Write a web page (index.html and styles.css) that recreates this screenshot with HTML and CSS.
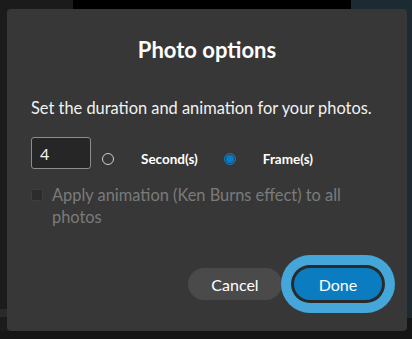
FILE: index.html
```html
<!DOCTYPE html>
<html lang="en">
<head>
  <meta charset="UTF-8">
  <meta name="viewport" content="width=device-width, initial-scale=1.0">
  <title>Photo options</title>
  <link rel="stylesheet" href="styles.css">
</head>
<body>
  <div class="app">
    <div class="topbar">
      <div class="topbar-left"></div>
      <div class="topbar-center"></div>
      <div class="topbar-right"></div>
    </div>
    <div class="workspace">
      <div class="side-left">
        <div class="side-band"></div>
      </div>
      <div class="stage"></div>
      <div class="side-right"></div>
    </div>
    <div class="statusbar"></div>
  </div>

  <div class="dialog" role="dialog" aria-labelledby="dialogTitle">
    <h3 id="dialogTitle">Photo options</h3>
    <p class="intro">Set the duration and animation for your photos.</p>

    <div class="duration-row">
      <input type="text" class="duration-input" value="4">
      <label class="radio">
        <input type="radio" name="unit">
        <span class="radio-mark"></span>
        <span class="radio-text">Second(s)</span>
      </label>
      <label class="radio">
        <input type="radio" name="unit" checked>
        <span class="radio-mark"></span>
        <span class="radio-text">Frame(s)</span>
      </label>
    </div>

    <label class="check disabled">
      <input type="checkbox" disabled>
      <span class="check-mark"></span>
      <span class="check-text">Apply animation (Ken Burns effect) to all photos</span>
    </label>

    <div class="actions">
      <button class="btn btn-cancel">Cancel</button>
      <button class="btn btn-done">Done</button>
    </div>
  </div>
</body>
</html>
```

FILE: styles.css
```css
html, body {
  margin: 0;
  padding: 0;
  height: 100%;
}

body {
  font-family: Lato, "Open Sans", sans-serif;
  background-color: #161616;
  overflow: hidden;
}

.app {
  display: flex;
  flex-direction: column;
  height: 100vh;
}

.topbar {
  display: flex;
  height: 9px;
}

.topbar-left {
  width: 73px;
  background-color: #1b1b1b;
}

.topbar-center {
  flex-grow: 1;
  background-color: #000;
}

.topbar-right {
  width: 61px;
  background-color: #1c2a32;
}

.workspace {
  display: flex;
  flex-grow: 1;
}

.side-left {
  width: 73px;
  background-color: #1b1b1b;
  padding-top: 300px;
}

.side-band {
  height: 8px;
  background-color: #2a2a2a;
}

.stage {
  flex-grow: 1;
  background-color: #000;
}

.side-right {
  width: 61px;
  height: 309px;
  background-color: #1c2a32;
}

.statusbar {
  height: 8px;
  background-color: #161616;
}

/* modal over the editor */
.dialog {
  position: absolute;
  left: 7px;
  top: 9px;
  width: 400px;
  height: 322px;
  box-sizing: border-box;
  padding: 27px 24px 31px 24px;
  background-color: #373737;
  border-radius: 4px;
  color: #f2f2f2;
  display: flex;
  flex-direction: column;
}

h3 {
  margin: 0;
  text-align: center;
  font-size: 22px;
  line-height: 28px;
  font-weight: 700;
  color: #fff;
}

.intro {
  margin: 33px 0 0 0;
  font-size: 16.4px;
  line-height: 22px;
}

.duration-row {
  display: flex;
  align-items: center;
  margin-top: 24px;
}

.duration-input {
  width: 60px;
  height: 32px;
  box-sizing: border-box;
  padding: 0 8px;
  background-color: #262626;
  border: 1px solid #8c8c8c;
  border-radius: 3px;
  color: #f2f2f2;
  font-family: inherit;
  font-size: 16px;
  position: relative;
  top: -6px;
}

.radio {
  display: flex;
  align-items: center;
}

.radio input,
.check input {
  display: none;
}

.radio-mark {
  width: 12px;
  height: 12px;
  box-sizing: border-box;
  border: 1px solid #cfcfcf;
  border-radius: 50%;
  margin-left: 11px;
}

.radio input:checked + .radio-mark {
  border-color: #0a7cc0;
  background-color: #0a7cc0;
  box-shadow: inset 0 0 0 1px #373737;
}

.radio-text {
  font-size: 13.5px;
  font-weight: 700;
  color: #fff;
  margin-left: 27px;
}

.radio + .radio .radio-mark {
  margin-left: 26px;
}

.check {
  display: flex;
  align-items: flex-start;
  margin-top: 9px;
}

.check-mark {
  flex-shrink: 0;
  width: 12px;
  height: 12px;
  box-sizing: border-box;
  margin-top: 5px;
  background-color: #2c2c2c;
  border: 1px solid #3e3e3e;
  border-radius: 2px;
}

.check-text {
  margin-left: 9px;
  font-size: 16.4px;
  line-height: 22px;
  color: #7b7b7b;
}

.actions {
  margin-top: auto;
  display: flex;
  justify-content: flex-end;
  gap: 12px;
  padding-right: 1px;
}

.btn {
  height: 32px;
  border: none;
  border-radius: 16px;
  font-family: inherit;
  font-size: 16px;
  color: #fff;
  cursor: pointer;
}

.btn-cancel {
  width: 94px;
  background-color: #4a4a4a;
}

.btn-done {
  width: 88px;
  background-color: #0a7cbf;
  box-shadow: 0 0 0 3px #2a2a2a, 0 0 0 13px #45a6d9;
}
```
